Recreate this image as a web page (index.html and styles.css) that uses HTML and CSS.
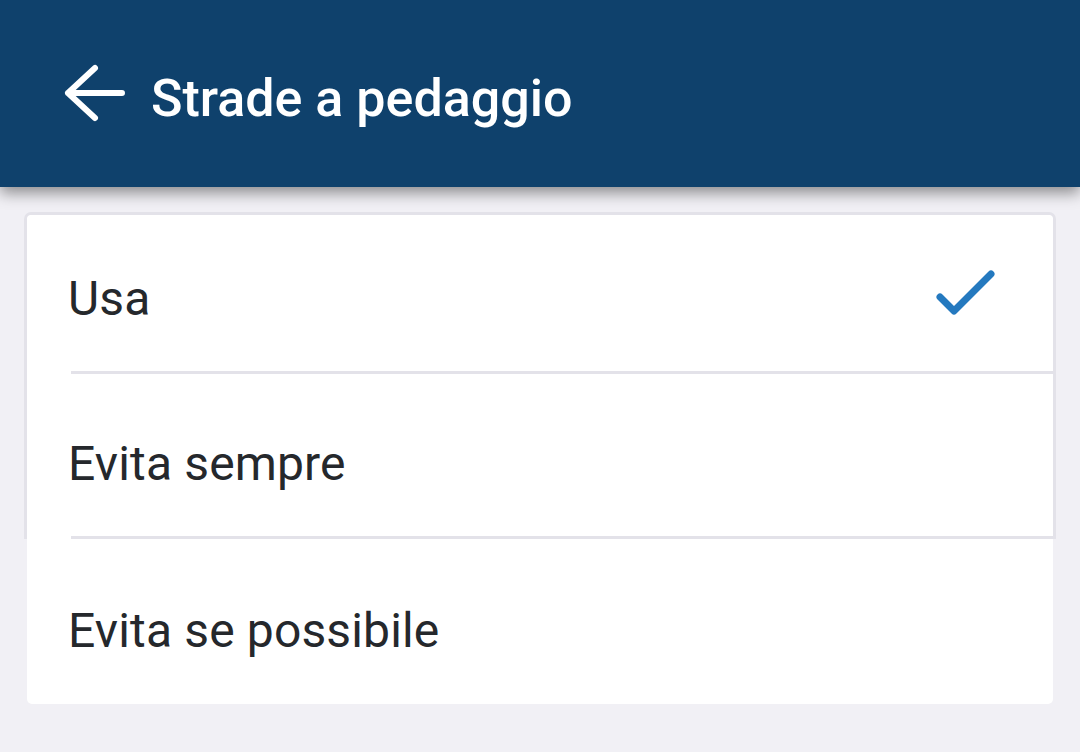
FILE: index.html
```html
<!DOCTYPE html>
<html lang="it">
<head>
<meta charset="utf-8">
<link rel="stylesheet" href="styles.css">
</head>
<body>
<header class="appbar">
  <svg class="back" width="64" height="64" viewBox="0 0 64 64">
    <path d="M60 32H6M33 7L6 32L33 57" fill="none" stroke="#fff" stroke-width="6" stroke-linecap="round" stroke-linejoin="round"/>
  </svg>
  <h1 class="title">Strade a pedaggio</h1>
</header>
<main class="list">
  <div class="group">
    <div class="row row-first">
      <span class="label">Usa</span>
      <svg class="check" width="64" height="64" viewBox="0 0 64 64">
        <path d="M7 36L21 50L58 13" fill="none" stroke="#2479bf" stroke-width="7" stroke-linecap="round" stroke-linejoin="round"/>
      </svg>
    </div>
    <div class="divider"></div>
    <div class="row">
      <span class="label">Evita sempre</span>
    </div>
    <div class="divider"></div>
  </div>
  <div class="row row-last">
    <span class="label">Evita se possibile</span>
  </div>
</main>
</body>
</html>
```
FILE: styles.css
```css
html, body {
  margin: 0;
  padding: 0;
}
body {
  width: 1080px;
  height: 752px;
  overflow: hidden;
  background: #f1f0f5;
  font-family: Roboto, "Noto Sans", sans-serif;
}
.appbar {
  position: relative;
  z-index: 1;
  height: 187px;
  box-sizing: border-box;
  background: #0f416c;
  display: flex;
  align-items: flex-start;
  padding: 61px 0 0 62px;
  box-shadow: 0 6px 14px rgba(0, 0, 0, 0.42);
}
.back {
  display: block;
  flex: none;
}
.title {
  margin: 8px 0 0 25px;
  font-size: 52px;
  font-weight: 500;
  line-height: 60px;
  color: #ffffff;
}
.list {
  margin: 25px 24px 0 24px;
}
.group {
  border: 3px solid #e3e2e9;
  border-bottom: none;
  border-radius: 7px 7px 0 0;
  background: #ffffff;
}
.row {
  height: 162px;
  box-sizing: border-box;
  display: flex;
  align-items: center;
  justify-content: space-between;
  padding-left: 41px;
  background: #ffffff;
}
.row-first {
  height: 156px;
  border-radius: 5px 5px 0 0;
}
.row-first .label {
  padding-top: 12px;
}
.label {
  padding-top: 18px;
  font-size: 48px;
  line-height: 56px;
  color: #25282c;
  letter-spacing: 0.15px;
}
.check {
  display: block;
  margin-right: 56px;
}
.divider {
  height: 3px;
  margin-left: 44px;
  background: #e3e2e9;
}
.row-last {
  margin: 0 3px;
  height: 165px;
  border-radius: 0 0 5px 5px;
}
```
